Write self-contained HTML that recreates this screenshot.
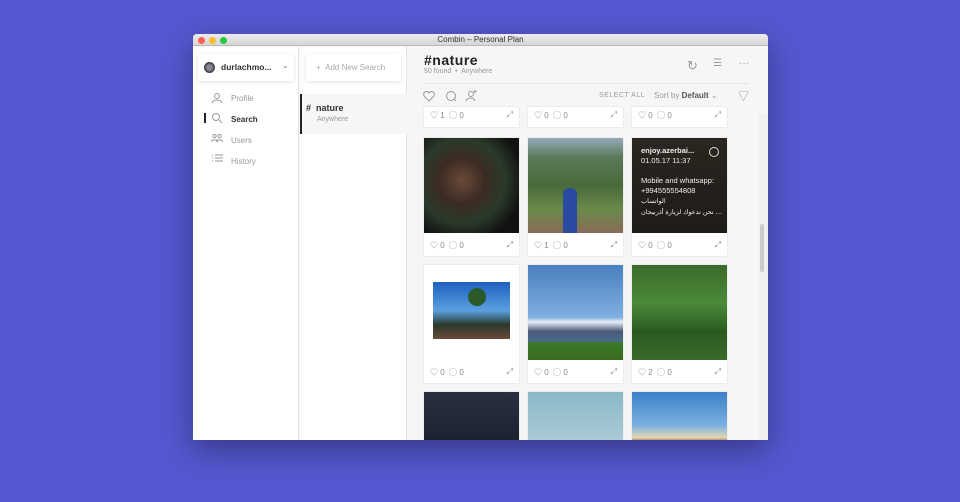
<!DOCTYPE html>
<html><head><meta charset="utf-8"><style>
*{margin:0;padding:0;box-sizing:border-box}
body{width:960px;height:502px;background:#5457cf;font-family:"Liberation Sans","Noto Sans CJK SC",sans-serif;position:relative;overflow:hidden}
.win{position:absolute;left:193px;top:34px;width:575px;height:406px;background:#f6f6f6;box-shadow:0 10px 30px rgba(0,0,0,.35);overflow:hidden;border-radius:4px 4px 0 0}
.tb{position:absolute;left:0;top:0;width:575px;height:12px;background:linear-gradient(#ececec,#d6d6d6);border-bottom:1px solid #bbb;font-size:8px;color:#333;text-align:center;line-height:12px}
.dot{position:absolute;top:3px;width:7px;height:7px;border-radius:50%}
.a{position:absolute}
.side{left:0;top:13px;width:106px;height:393px;background:#fff;border-right:1px solid #e4e4e4}
.mid{left:107px;top:13px;width:107px;height:393px;background:#fff;border-right:1px solid #e4e4e4}
.nav{position:absolute;left:38px;font-size:8px;color:#999}
.card{position:absolute;width:95px;background:#fff;box-shadow:0 0 1px rgba(0,0,0,.2)}
.ft{position:absolute;bottom:0;left:0;width:95px;height:23px;font-size:8px;color:#888;padding:7px 0 0 6px}
.img{position:absolute;left:0;top:0;width:95px;height:95px;overflow:hidden}
.ic{color:#999}
</style></head><body>
<div class="win">
<div class="tb">Combin – Personal Plan
<div class="dot" style="left:5px;background:#fc5f57"></div><div class="dot" style="left:16px;background:#fdbc2e"></div><div class="dot" style="left:27px;background:#28c840"></div></div>
<div class="a side">
 <div class="a" style="left:5px;top:7px;width:96px;height:27px;background:#fff;box-shadow:0 1px 4px rgba(0,0,0,.12)">
  <div class="a" style="left:6px;top:8px;width:11px;height:11px;border-radius:50%;background:radial-gradient(#889 30%,#333 70%)"></div>
  <div class="a" style="left:23px;top:8px;font-size:8.5px;font-weight:bold;color:#333">durlachmo...</div>
  <div class="a" style="left:84px;top:7px;font-size:8px;color:#777">⌄</div>
 </div>
 <svg class="a" style="left:18px;top:45px" width="12" height="80" fill="none" stroke="#999" stroke-width="1">
  <circle cx="6" cy="4" r="2.5"/><path d="M1 11c1-4 9-4 10 0"/>
  <circle cx="5" cy="25" r="3.5"/><path d="M8 28l3 3"/>
  <circle cx="3.5" cy="44" r="1.6"/><circle cx="8.5" cy="44" r="1.6"/><path d="M0 50c1-3 6-3 7 0M5 50c1-3 6-3 7 0"/>
  <path d="M4 63h8M4 66h8M4 69h8M1 63h1M1 66h1M1 69h1"/>
 </svg>
 <div class="a" style="left:11px;top:66px;width:1.5px;height:10px;background:#222"></div>
 <div class="nav" style="top:47px">Profile</div>
 <div class="nav" style="top:68px;color:#333;font-weight:bold">Search</div>
 <div class="nav" style="top:89px">Users</div>
 <div class="nav" style="top:110px">History</div>
</div>
<div class="a mid">
 <div class="a" style="left:6px;top:7px;width:95px;height:27px;background:#fff;box-shadow:0 1px 4px rgba(0,0,0,.12);font-size:8px;color:#aaa;padding:9px 0 0 10px">+ &nbsp;Add New Search</div>
 <div class="a" style="left:0;top:47px;width:107px;height:40px;background:#f6f6f6;border-left:2px solid #222"></div>
 <div class="a" style="left:6px;top:56px;font-size:9px;font-weight:bold;color:#333"># &nbsp;nature</div>
 <div class="a" style="left:17px;top:69px;font-size:7px;color:#999">Anywhere</div>
</div>
<div class="a" style="left:231px;top:18px;font-size:14px;font-weight:bold;color:#222;letter-spacing:.5px">#nature</div>
<div class="a" style="left:231px;top:34px;font-size:7px;color:#999">50 found &nbsp;•&nbsp; Anywhere</div>
<div class="a" style="left:231px;top:49px;width:325px;height:1px;background:#e6e6e6"></div>
<div class="a ic" style="left:494px;top:24px;font-size:13px">↻</div>
<div class="a ic" style="left:520px;top:24px;font-size:10px">☰</div>
<div class="a ic" style="left:546px;top:24px;font-size:10px">···</div>
<svg class="a" style="left:230px;top:55px" width="70" height="14" fill="none" stroke="#999" stroke-width="1"><path d="M6 12L1.5 7.5C0 6 0.5 2.5 3.5 2.5 5 2.5 6 4 6 4s1-1.5 2.5-1.5c3 0 3.5 3.5 2 5z"/><circle cx="28" cy="7" r="4.5"/><path d="M31 10l2 2"/><circle cx="48" cy="5" r="2.5"/><path d="M43 12c1-4 8-4 9 0M52 1v3M50.5 2.5h3"/></svg>
<div class="a" style="left:406px;top:58px;font-size:7px;color:#999;letter-spacing:.5px">SELECT ALL</div>
<div class="a" style="left:461px;top:57px;font-size:8px;color:#999">Sort by <b style="color:#555">Default</b> ⌄</div>
<div class="a ic" style="left:545px;top:54px;font-size:11px">▽</div>
<div class="a" style="left:566px;top:80px;width:9px;height:326px;background:#f0f0f0"></div>
<div class="a" style="left:567px;top:190px;width:4px;height:48px;background:#ccc;border-radius:2px"></div>
<div class="card" style="left:231px;top:73px;height:20px"><div class="ft" style="padding-top:6px">♡ 1 &nbsp;◯ 0<span style="position:absolute;right:6px">⤢</span></div></div>
<div class="card" style="left:335px;top:73px;height:20px"><div class="ft" style="padding-top:6px">♡ 0 &nbsp;◯ 0<span style="position:absolute;right:6px">⤢</span></div></div>
<div class="card" style="left:439px;top:73px;height:20px"><div class="ft" style="padding-top:6px">♡ 0 &nbsp;◯ 0<span style="position:absolute;right:6px">⤢</span></div></div>
<div class="card" style="left:231px;top:104px;height:118px"><div class="img" style="background:radial-gradient(circle at 40% 45%,#6a4a3a 0,#3b2b22 30%,#2a3a2a 55%,#111 80%)"></div><div class="ft">♡ 0 &nbsp;◯ 0<span style="position:absolute;right:6px">⤢</span></div></div>
<div class="card" style="left:335px;top:104px;height:118px"><div class="img" style="background:linear-gradient(#9ab 0,#5a7a5a 20%,#4a6a3a 50%,#6a8a4a 75%,#8a6a5a 100%)"><div class="a" style="left:35px;top:50px;width:14px;height:45px;background:#2a4aa0;border-radius:6px 6px 0 0"></div></div><div class="ft">♡ 1 &nbsp;◯ 0<span style="position:absolute;right:6px">⤢</span></div></div>
<div class="card" style="left:439px;top:104px;height:118px"><div class="img" style="background:linear-gradient(#2a2620,#1e1c18);color:#eee;font-size:7.5px;padding:8px 0 0 9px;line-height:10px"><b>enjoy.azerbai...</b><br>01.05.17 11:37<br><br>Mobile and whatsapp:<br>+994555554808<br><span style="font-size:6.5px">الواتساب</span><br><span style="font-size:6.5px">نحن ندعوك لزيارة أذربيجان</span> ...<div class="a" style="right:8px;top:9px;width:10px;height:10px;border:1px solid #ddd;border-radius:50%"></div></div><div class="ft">♡ 0 &nbsp;◯ 0<span style="position:absolute;right:6px">⤢</span></div></div>
<div class="card" style="left:231px;top:231px;height:118px"><div class="a" style="left:9px;top:17px;width:77px;height:57px;background:linear-gradient(#1e60c0,#5aa0e0 50%,#2a3a2a 75%,#6a4a3a)"><div class="a" style="left:35px;top:6px;width:18px;height:18px;border-radius:50%;background:#2a5a2a"></div></div><div class="ft">♡ 0 &nbsp;◯ 0<span style="position:absolute;right:6px">⤢</span></div></div>
<div class="card" style="left:335px;top:231px;height:118px"><div class="img" style="background:linear-gradient(#4a80c0 0,#80aee0 55%,#e8eef6 60%,#4a5a78 70%,#4a6a8a 80%,#3a7a2a 82%,#3a6a20 100%)"></div><div class="ft">♡ 0 &nbsp;◯ 0<span style="position:absolute;right:6px">⤢</span></div></div>
<div class="card" style="left:439px;top:231px;height:118px"><div class="img" style="background:linear-gradient(#3a6a2a,#4a8a3a 40%,#2a5a20 70%,#3a6a28)"></div><div class="ft">♡ 2 &nbsp;◯ 0<span style="position:absolute;right:6px">⤢</span></div></div>
<div class="card" style="left:231px;top:358px;height:60px"><div class="img" style="background:linear-gradient(#2a3040,#0e1420)"></div></div>
<div class="card" style="left:335px;top:358px;height:60px"><div class="img" style="background:linear-gradient(#8ab8c8,#c8dce0)"></div></div>
<div class="card" style="left:439px;top:358px;height:60px"><div class="img" style="background:linear-gradient(#3a80c8,#7ab0e0 35%,#e0d8b0 48%,#a06a4a 52%,#2a5aa0 60%)"></div></div>
</div>
</body></html>
